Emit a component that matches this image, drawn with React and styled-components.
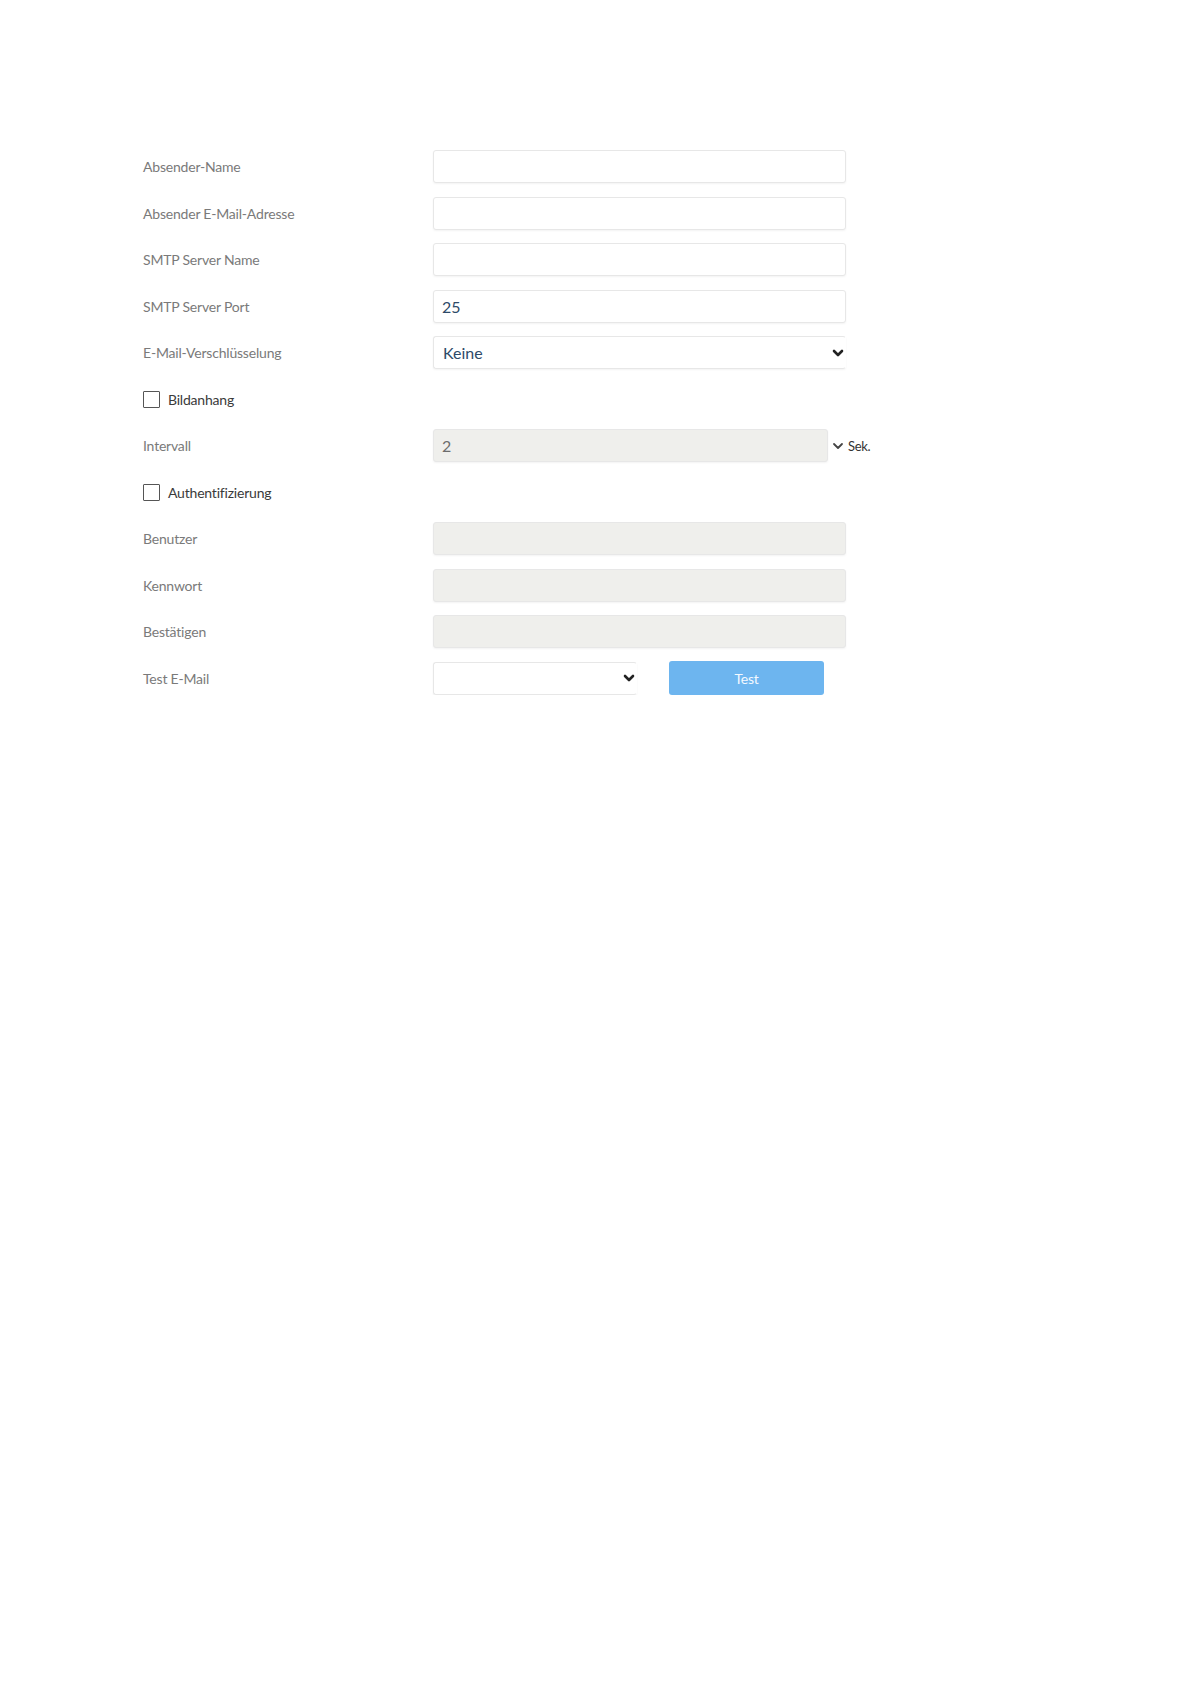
import React from 'react'
import styled, {createGlobalStyle} from 'styled-components'

const Global = createGlobalStyle`
    body {
        margin: 0;
        background: #ffffff;
        font-family: Lato, 'Open Sans', sans-serif;
    }
`

const Chevron = ({size = 12, weight = 2.6, color = '#222'}) => (
    <svg width={size} height={size} viewBox="0 0 12 12" fill="none">
        <path d="M2 4 L6 8 L10 4" stroke={color} strokeWidth={weight} strokeLinecap="round" strokeLinejoin="round" />
    </svg>
)

const Page = () => {
    return (
        <Form>
            <Row>
                <Label>Absender-Name</Label>
                <Field />
            </Row>
            <Row>
                <Label>Absender E-Mail-Adresse</Label>
                <Field />
            </Row>
            <Row>
                <Label>SMTP Server Name</Label>
                <Field />
            </Row>
            <Row>
                <Label>SMTP Server Port</Label>
                <Field>25</Field>
            </Row>
            <Row>
                <Label>E-Mail-Verschlüsselung</Label>
                <Select $width={413}>
                    <span>Keine</span>
                    <Chevron />
                </Select>
            </Row>
            <Row>
                <Check>
                    <Box />
                    Bildanhang
                </Check>
            </Row>
            <Row>
                <Label>Intervall</Label>
                <Inline>
                    <Field $disabled $width={395}>2</Field>
                    <Chevron size={12} weight={1.8} color="#444" />
                    <Unit>Sek.</Unit>
                </Inline>
            </Row>
            <Row>
                <Check>
                    <Box />
                    Authentifizierung
                </Check>
            </Row>
            <Row>
                <Label>Benutzer</Label>
                <Field $disabled />
            </Row>
            <Row>
                <Label>Kennwort</Label>
                <Field $disabled />
            </Row>
            <Row>
                <Label>Bestätigen</Label>
                <Field $disabled />
            </Row>
            <Row>
                <Label>Test E-Mail</Label>
                <Inline $gap={32}>
                    <Select $width={204}>
                        <span></span>
                        <Chevron />
                    </Select>
                    <Button>Test</Button>
                </Inline>
            </Row>
        </Form>
    )
}

export default function App() {
    return (
        <>
            <Global />
            <Page />
        </>
    )
}

const Form = styled.div`
    padding: 150px 0 0 143px;
    display: flex;
    flex-direction: column;
    gap: 13.5px;
`

const Row = styled.div`
    display: flex;
    align-items: center;
    height: 33px;
`

const Label = styled.div`
    width: 290px;
    flex: none;
    font-size: 14px;
    color: #7a7a7a;
    letter-spacing: -0.2px;
`

const Field = styled.div`
    box-sizing: border-box;
    width: ${p => p.$width || 413}px;
    height: 33px;
    display: flex;
    align-items: center;
    padding: 0 8px;
    border: 1px solid #e7e7e7;
    border-radius: 3px;
    box-shadow: 0 1px 2px rgba(0, 0, 0, 0.05);
    background: ${p => p.$disabled ? '#efefec' : '#ffffff'};
    color: ${p => p.$disabled ? '#6d6d6d' : '#2d4a68'};
    font-size: 16px;
`

const Select = styled.div`
    box-sizing: border-box;
    width: ${p => p.$width}px;
    height: 33px;
    display: flex;
    align-items: center;
    justify-content: space-between;
    padding: 0 1px 0 9px;
    border: 1px solid #e7e7e7;
    border-right-color: transparent;
    border-radius: 3px;
    box-shadow: 0 1px 2px rgba(0, 0, 0, 0.05);
    color: #2d4a68;
    font-size: 16px;
`

const Inline = styled.div`
    display: flex;
    align-items: center;
    gap: ${p => p.$gap || 4}px;
`

const Unit = styled.span`
    font-size: 13px;
    color: #333;
    letter-spacing: -0.3px;
`

const Check = styled.label`
    display: flex;
    align-items: center;
    gap: 8px;
    font-size: 14px;
    color: #3a3a3a;
    letter-spacing: -0.2px;
`

const Box = styled.span`
    box-sizing: border-box;
    width: 17px;
    height: 17px;
    border: 1px solid #555;
    border-radius: 1px;
    background: #fff;
`

const Button = styled.button`
    width: 155px;
    height: 34px;
    border: none;
    border-radius: 3px;
    background: #6db5ef;
    color: #f4f9ff;
    font-family: Lato, sans-serif;
    font-size: 14px;
    letter-spacing: -0.3px;
`
